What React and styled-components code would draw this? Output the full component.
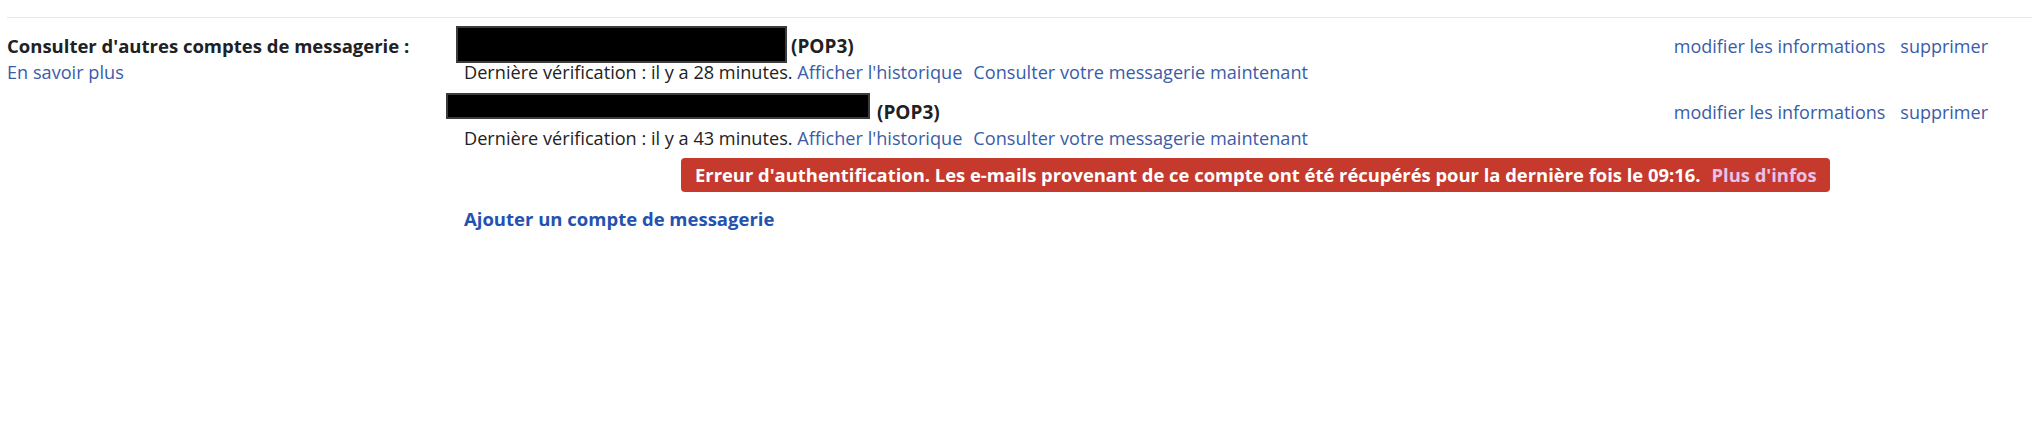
import React from 'react';
import styled, { createGlobalStyle } from 'styled-components';

const Global = createGlobalStyle`
  html, body { margin: 0; padding: 0; background: #ffffff; }
  body {
    font-family: "Open Sans", Roboto, "Liberation Sans", Arial, sans-serif;
    color: #222222;
    font-size: 18.15px;
  }
`;

const Page = styled.div`
  width: 2032px;
  height: 434px;
  box-sizing: border-box;
  padding-top: 17px;
`;

const Divider = styled.div`
  margin-left: 7px;
  height: 1px;
  background: #e6e6e6;
`;

const Section = styled.div`
  display: grid;
  grid-template-columns: 457px 1fr;
  padding: 15px 44px 0 7px;
  line-height: 26px;
`;

const LabelCol = styled.div`
  display: flex;
  flex-direction: column;
`;

const Title = styled.div`
  font-weight: 700;
  color: #202124;
  font-size: 18.5px;
`;

const Link = styled.a`
  color: ${(p) => (p.$strong ? '#2352b0' : '#3a5ca8')};
  font-weight: ${(p) => (p.$strong ? 700 : 400)};
  font-size: ${(p) => (p.$strong ? '18.5px' : 'inherit')};
  margin-left: ${(p) => p.$gap || 0}px;
  text-decoration: none;
  cursor: pointer;
  white-space: nowrap;
`;

const Content = styled.div`
  display: flex;
  flex-direction: column;
`;

const Account = styled.div`
  display: flex;
  flex-direction: column;
  & + & { margin-top: 14px; }
`;

const TopLine = styled.div`
  display: flex;
  justify-content: space-between;
  align-items: flex-start;
  height: 26px;
`;

const Address = styled.div`
  white-space: nowrap;
`;

const Redacted = styled.span`
  display: inline-block;
  vertical-align: top;
  box-sizing: border-box;
  background: #000;
  border: 2px solid #3c3c3c;
  width: ${(p) => p.$w}px;
  height: ${(p) => p.$h}px;
  margin: ${(p) => p.$mt}px ${(p) => p.$mr}px ${(p) => p.$mb}px ${(p) => p.$ml}px;
`;

const Protocol = styled.span`
  font-weight: 700;
  font-size: 19px;
  color: #202124;
`;

const Actions = styled.div`
  display: flex;
  gap: 15px;
  font-size: 18px;
`;

const Status = styled.div`
  white-space: nowrap;
`;

const Banner = styled.div`
  align-self: flex-start;
  margin: 7px 0 0 217px;
  padding: 5px 13px 5px 14px;
  line-height: 24px;
  font-size: 18.4px;
  background: #c53a2c;
  color: #ffffff;
  border-radius: 4px;
  font-weight: 700;
  white-space: nowrap;
  display: flex;
  gap: 11px;
`;

const BannerLink = styled.a`
  color: #e6c3ea;
  text-decoration: none;
  cursor: pointer;
`;

const AddLine = styled.div`
  margin-top: 14px;
`;

const accounts = [
  { box: { w: 331, h: 37, mt: -7, mb: -4, ml: -8, mr: 4 }, ago: 28 },
  { box: { w: 424, h: 26, mt: -6, mb: 0, ml: -18, mr: 7 }, ago: 43 },
];

function AccountRow({ box, ago }) {
  return (
    <Account>
      <TopLine>
        <Address>
          <Redacted $w={box.w} $h={box.h} $mt={box.mt} $mb={box.mb} $ml={box.ml} $mr={box.mr} />
          <Protocol>(POP3)</Protocol>
        </Address>
        <Actions>
          <Link>modifier les informations</Link>
          <Link>supprimer</Link>
        </Actions>
      </TopLine>
      <Status>
        Dernière vérification : il y a {ago} minutes.{' '}
        <Link>Afficher l'historique</Link>
        <Link $gap={11}>Consulter votre messagerie maintenant</Link>
      </Status>
    </Account>
  );
}

export default function App() {
  return (
    <Page>
      <Global />
      <Divider />
      <Section>
        <LabelCol>
          <Title>Consulter d'autres comptes de messagerie :</Title>
          <div><Link>En savoir plus</Link></div>
        </LabelCol>
        <Content>
          {accounts.map((a, i) => (
            <AccountRow key={i} {...a} />
          ))}
          <Banner>
            <span>Erreur d'authentification. Les e-mails provenant de ce compte ont été récupérés pour la dernière fois le 09:16.</span>
            <BannerLink>Plus d'infos</BannerLink>
          </Banner>
          <AddLine>
            <Link $strong>Ajouter un compte de messagerie</Link>
          </AddLine>
        </Content>
      </Section>
    </Page>
  );
}
